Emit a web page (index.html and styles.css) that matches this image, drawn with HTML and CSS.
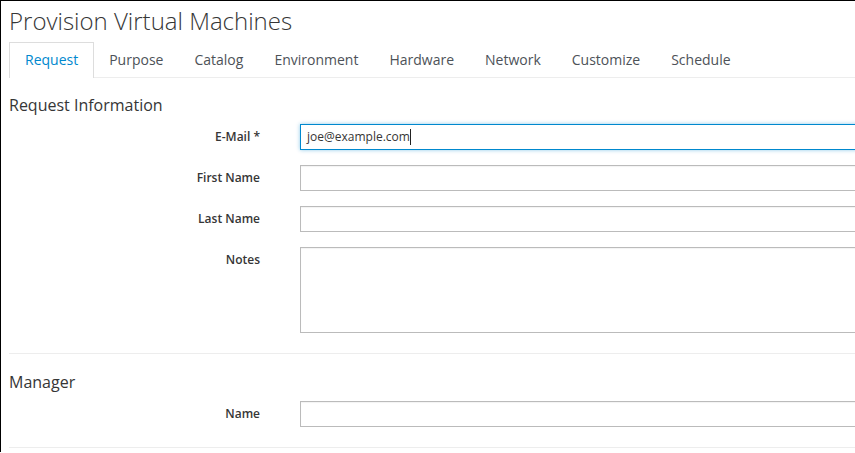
FILE: index.html
```html
<!DOCTYPE html>
<html>
<head>
<meta charset="utf-8">
<link rel="stylesheet" href="styles.css">
</head>
<body>
<div class="frame">
  <h1 class="title">Provision Virtual Machines</h1>
  <ul class="tabs">
    <li class="tab active">Request</li>
    <li class="tab">Purpose</li>
    <li class="tab">Catalog</li>
    <li class="tab">Environment</li>
    <li class="tab">Hardware</li>
    <li class="tab">Network</li>
    <li class="tab">Customize</li>
    <li class="tab">Schedule</li>
  </ul>
  <section class="section">
    <h2 class="section-title">Request Information</h2>
    <div class="form">
      <label class="label">E-Mail *</label>
      <div class="input focused">joe@example.com<span class="caret"></span></div>
      <label class="label">First Name</label>
      <div class="input"></div>
      <label class="label">Last Name</label>
      <div class="input"></div>
      <label class="label label-top">Notes</label>
      <div class="input textarea"></div>
    </div>
  </section>
  <hr class="divider">
  <section class="section">
    <h2 class="section-title section-title-next">Manager</h2>
    <div class="form">
      <label class="label">Name</label>
      <div class="input"></div>
    </div>
  </section>
  <hr class="divider">
</div>
</body>
</html>
```

FILE: styles.css
```css
html, body {
  margin: 0;
  padding: 0;
  background: #fff;
  overflow: hidden;
}
body {
  width: 855px;
  height: 453px;
  font-family: "Open Sans", "Noto Sans", sans-serif;
  color: #363636;
}
.frame {
  border-top: 1px solid #000;
  border-left: 1px solid #000;
  height: 452px;
  padding-left: 8px;
  width: 1200px;
  box-sizing: border-box;
}
.title {
  margin: 0;
  padding-top: 4px;
  font-size: 24px;
  font-weight: 300;
  line-height: 32px;
  color: #363636;
}
.tabs {
  list-style: none;
  margin: 5px 0 0 0;
  padding: 0;
  display: flex;
  border-bottom: 1px solid #ededed;
}
.tab {
  font-size: 14px;
  line-height: 20px;
  padding: 7px 15px;
  border: 1px solid transparent;
  border-bottom: none;
  margin-bottom: -1px;
  color: #4d5258;
  margin-right: -1px;
}
.tab.active {
  color: #0088ce;
  border-color: #ddd;
  background: #fff;
  padding-bottom: 8px;
}
.section-title {
  margin: 0;
  font-size: 16px;
  font-weight: 400;
  line-height: 22px;
  padding-top: 16px;
}
.section-title-next {
  padding-top: 17px;
}
.form {
  display: grid;
  grid-template-columns: 251px 1fr;
  column-gap: 40px;
  row-gap: 15px;
  margin-top: 8px;
}
.label {
  text-align: right;
  font-size: 12px;
  font-weight: 600;
  line-height: 26px;
}
.label-top {
  align-self: start;
}
.input {
  height: 26px;
  box-sizing: border-box;
  border: 1px solid #bbb;
  background: #fff;
  font-size: 12px;
  line-height: 24px;
  padding: 0 6px;
  color: #363636;
  box-shadow: inset 0 1px 1px rgba(3,3,3,0.05);
}
.input.focused {
  border-color: #0088ce;
  box-shadow: 0 0 4px rgba(0,136,206,0.45);
}
.caret {
  display: inline-block;
  width: 1px;
  height: 16px;
  background: #222;
  vertical-align: middle;
  margin-top: -2px;
}
.textarea {
  height: 86px;
}
.divider {
  border: none;
  border-top: 1px solid #ededed;
  margin: 20px 0 0 0;
}
```
